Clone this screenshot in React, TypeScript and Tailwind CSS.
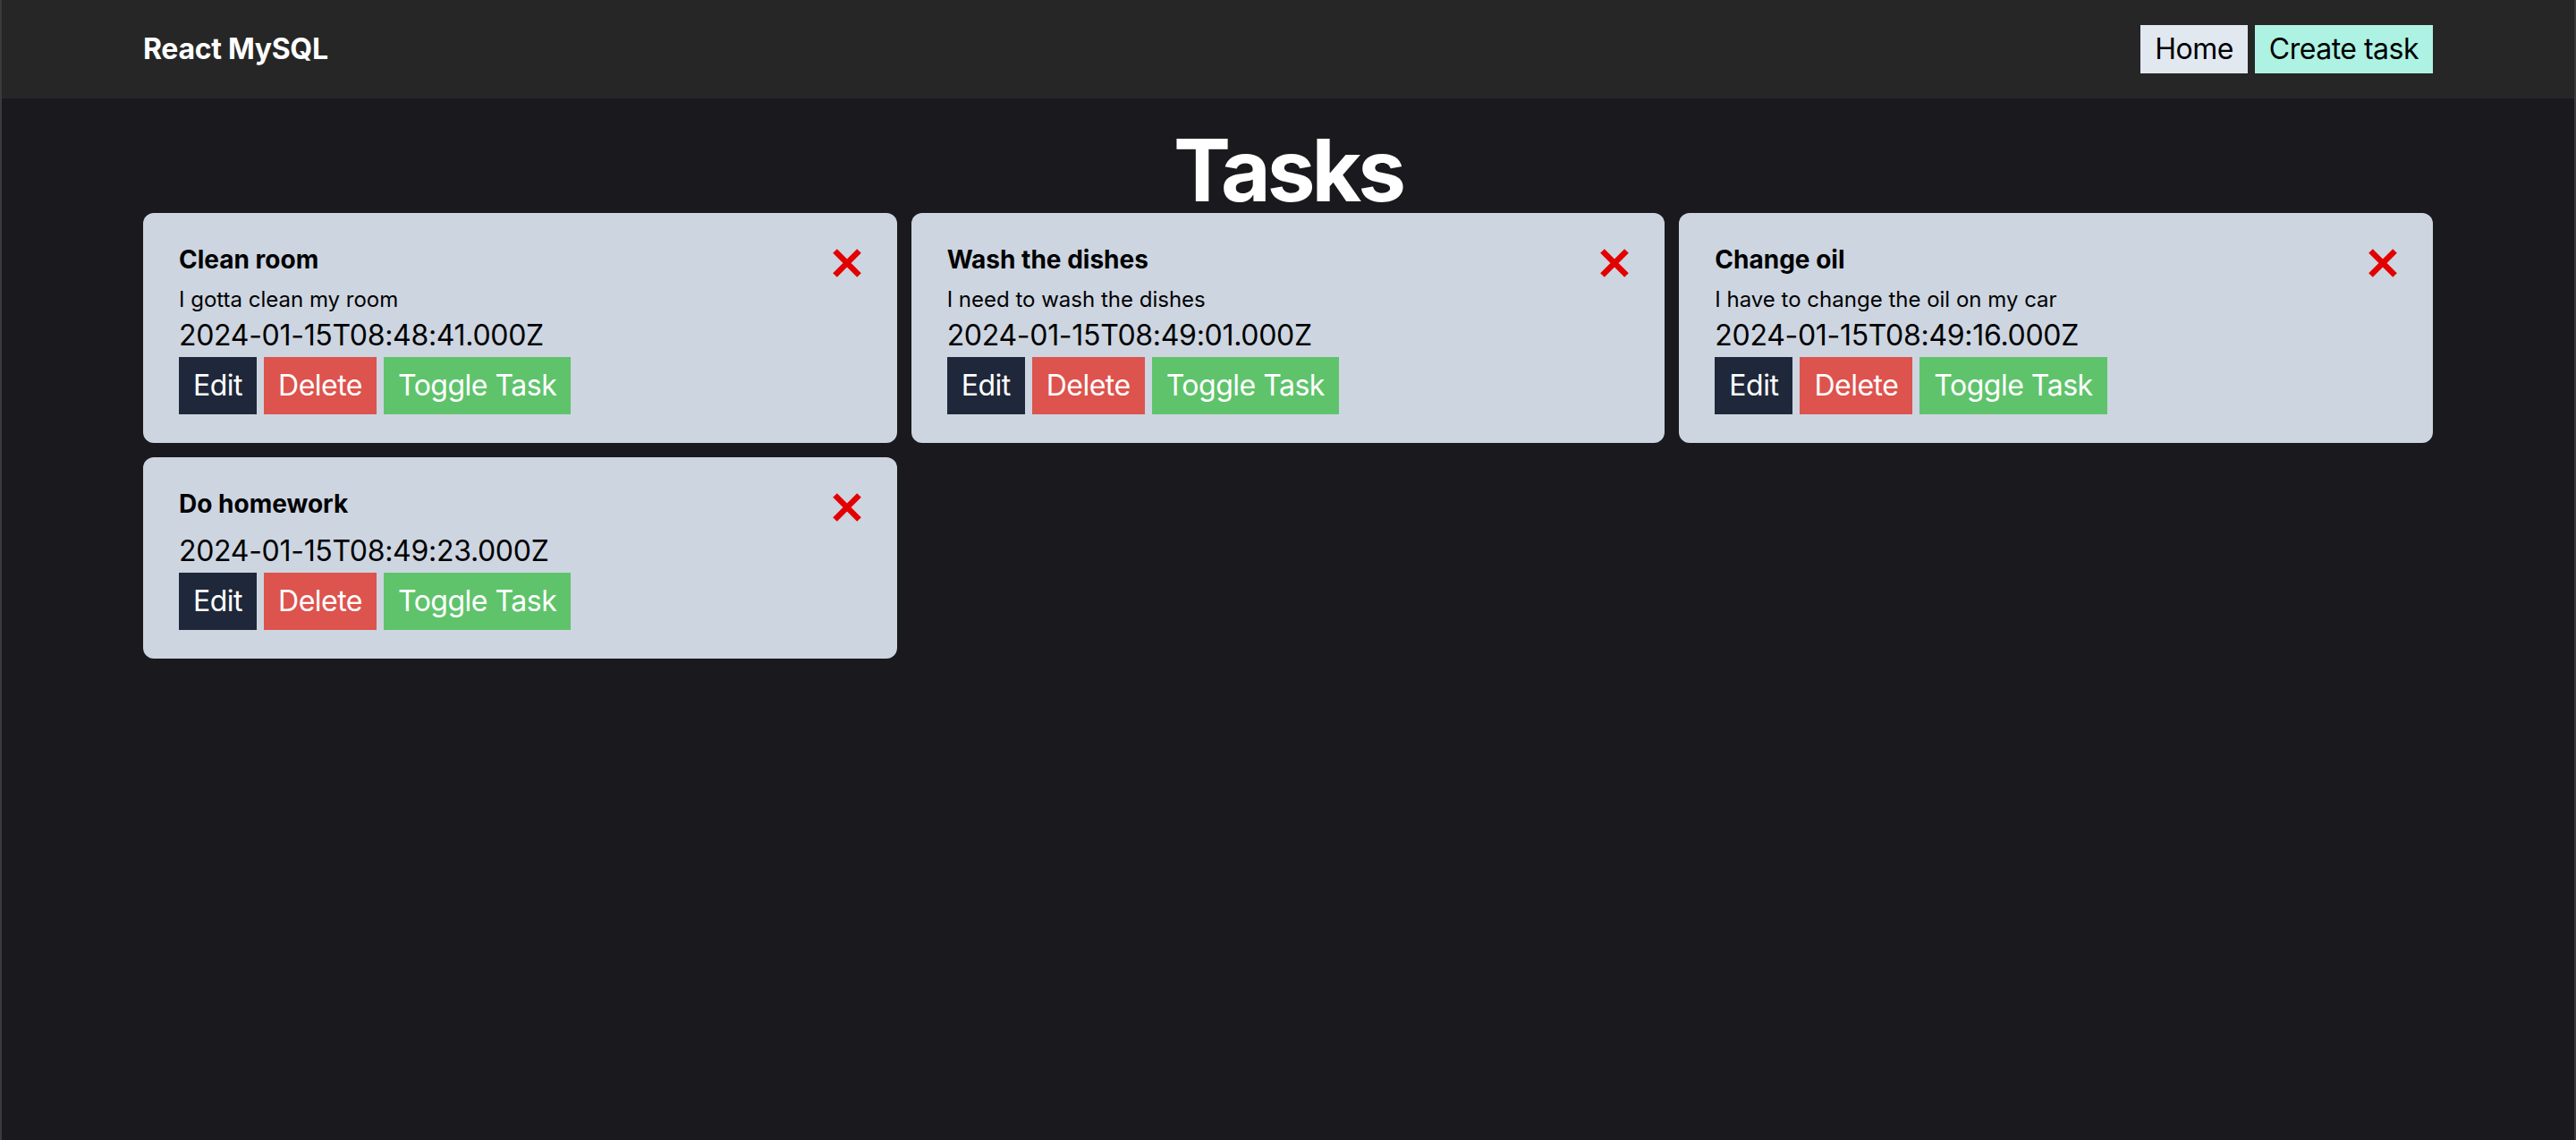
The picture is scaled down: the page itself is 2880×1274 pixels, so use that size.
import React from 'react';

interface Task {
  id: number;
  title: string;
  description?: string;
  createdAt: string;
}

const tasks: Task[] = [
  { id: 1, title: 'Clean room', description: 'I gotta clean my room', createdAt: '2024-01-15T08:48:41.000Z' },
  { id: 2, title: 'Wash the dishes', description: 'I need to wash the dishes', createdAt: '2024-01-15T08:49:01.000Z' },
  { id: 3, title: 'Change oil', description: 'I have to change the oil on my car', createdAt: '2024-01-15T08:49:16.000Z' },
  { id: 4, title: 'Do homework', createdAt: '2024-01-15T08:49:23.000Z' },
];

function CrossIcon() {
  return (
    <svg width="32" height="32" viewBox="0 0 32 32" className="mt-2 shrink-0">
      <path d="M2.5 2.5 L29.5 29.5 M29.5 2.5 L2.5 29.5" stroke="#e30000" strokeWidth="6.5" strokeLinecap="butt" />
    </svg>
  );
}

function TaskCard({ task }: { task: Task }) {
  return (
    <div className="bg-[#cdd5e0] rounded-[12px] px-10 py-8 text-black">
      <div className="flex justify-between items-start h-[40px] mb-[9px]">
        <h2 className="text-[28px] leading-[40px] font-bold">{task.title}</h2>
        <CrossIcon />
      </div>
      {task.description && <p className="text-[24px] leading-[32px]">{task.description}</p>}
      <span className="block text-[32px] leading-[48px] tracking-[-0.3px]">{task.createdAt}</span>
      <div className="flex gap-2 text-[32px] tracking-[-0.5px] text-white">
        <button className="h-[64px] px-4 bg-[#1f283a]">Edit</button>
        <button className="h-[64px] px-4 bg-[#dd534e]">Delete</button>
        <button className="h-[64px] px-4 bg-[#5fc36c]">Toggle Task</button>
      </div>
    </div>
  );
}

export default function App() {
  return (
    <div className="min-h-screen bg-[#1a1a1e] border-x-2 border-[#3b3b3e] font-['Inter',sans-serif]">
      {/* Navbar */}
      <nav className="bg-[#262626] h-[110px]">
        <div className="max-w-[2560px] mx-auto h-full flex items-center justify-between">
          <a className="text-white font-bold text-[32px] tracking-[-0.3px]">React MySQL</a>
          <ul className="flex gap-2 text-[32px] tracking-[-0.5px] text-black">
            <li className="h-[54px] px-4 flex items-center bg-[#e2e8f0]">Home</li>
            <li className="h-[54px] px-4 flex items-center bg-[#aef2e3]">Create task</li>
          </ul>
        </div>
      </nav>

      <main className="max-w-[2560px] mx-auto pt-8">
        <h1 className="text-center text-white font-bold text-[96px] leading-none tracking-[-4px]">Tasks</h1>
        <div className="grid grid-cols-3 gap-4">
          {tasks.map(task => (
            <TaskCard key={task.id} task={task} />
          ))}
        </div>
      </main>
    </div>
  );
}
